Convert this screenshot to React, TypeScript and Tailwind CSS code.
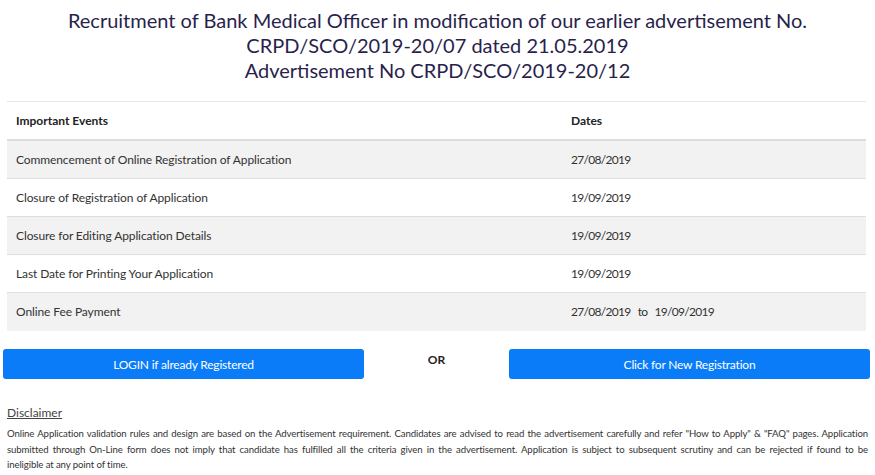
import React from "react";

const ROWS: { event: string; date: string }[] = [
  { event: "Commencement of Online Registration of Application", date: "27/08/2019" },
  { event: "Closure of Registration of Application", date: "19/09/2019" },
  { event: "Closure for Editing Application Details", date: "19/09/2019" },
  { event: "Last Date for Printing Your Application", date: "19/09/2019" },
  { event: "Online Fee Payment", date: "27/08/2019\u00a0\u00a0 to \u00a0\u00a019/09/2019" },
];

export default function App() {
  return (
    <div className="w-[875px] h-[475px] overflow-hidden bg-white text-[#333] font-['Lato',sans-serif]">
      {/* Heading */}
      <div className="pt-[8px] text-center text-[20px] leading-[25px] text-[#2a1f4d]">
        <p>Recruitment of Bank Medical Officer in modification of our earlier advertisement No.</p>
        <p>CRPD/SCO/2019-20/07 dated 21.05.2019</p>
        <p>Advertisement No CRPD/SCO/2019-20/12</p>
      </div>

      {/* Events table */}
      <div className="mt-[18px] ml-[7px] w-[859px] border-t border-[#e6e6e6]">
        <div className="flex h-[39px] items-center border-b-2 border-[#dedede] text-[12px] font-bold text-[#222]">
          <div className="w-[564px] pl-[9px]">Important Events</div>
          <div>Dates</div>
        </div>
        {ROWS.map((r, i) => (
          <div
            key={r.event}
            className={`flex h-[38px] items-center text-[12px] tracking-[-0.1px] text-[#333] ${
              i % 2 === 0 ? "bg-[#f2f2f2]" : "bg-white"
            } ${i < ROWS.length - 1 ? "border-b border-[#dedede]" : ""}`}
          >
            <div className="w-[564px] pl-[9px]">{r.event}</div>
            <div className="whitespace-pre tracking-[-0.7px]">{r.date}</div>
          </div>
        ))}
      </div>

      {/* Actions */}
      <div className="mt-[18px] flex items-start pl-[3px] pr-[5px]">
        <button className="h-[30px] w-[361px] rounded-[3px] bg-[#0a7cf8] pt-[1px] text-[12px] tracking-[-0.2px] text-white">
          LOGIN if already Registered
        </button>
        <div className="flex-1 pt-[2px] text-center text-[12px] font-bold text-[#222]">OR</div>
        <button className="h-[30px] w-[361px] rounded-[3px] bg-[#0a7cf8] pt-[1px] text-[12px] tracking-[-0.2px] text-white">
          Click for New Registration
        </button>
      </div>

      {/* Disclaimer */}
      <div className="mt-[26px] px-[7px]">
        <p className="text-[12px] leading-[16px] text-[#444] underline">Disclaimer</p>
        <p className="mt-[5px] text-[9.6px] leading-[15.5px] tracking-[-0.1px] text-[#333]">
          <span className="block text-justify [text-align-last:justify]">
            Online Application validation rules and design are based on the Advertisement requirement. Candidates are
            advised to read the advertisement carefully and refer "How to Apply" &amp; "FAQ" pages. Application
          </span>
          <span className="block text-justify [text-align-last:justify]">
            submitted through On-Line form does not imply that candidate has fulfilled all the criteria given in the
            advertisement. Application is subject to subsequent scrutiny and can be rejected if found to be
          </span>
          <span className="block">ineligible at any point of time.</span>
        </p>
      </div>
    </div>
  );
}
